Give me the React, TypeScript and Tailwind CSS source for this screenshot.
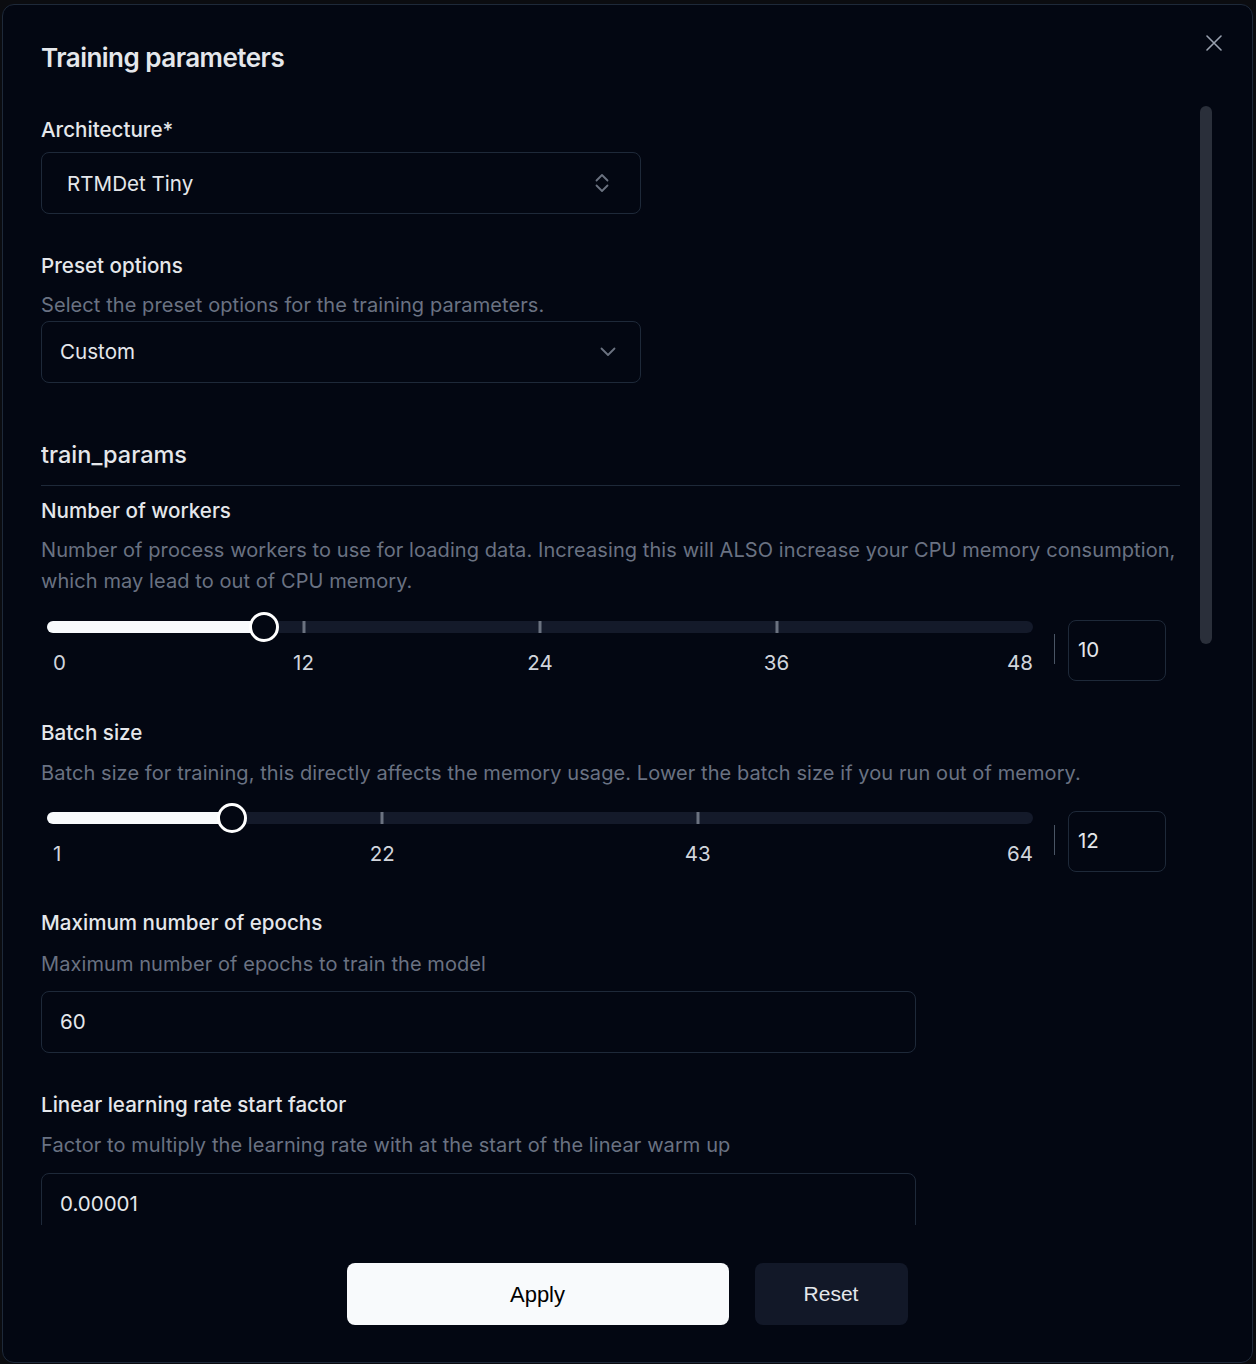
import React from "react";

const inter = "font-['Inter',sans-serif]";
const arial = "font-['Liberation_Sans',Arial,sans-serif]";

interface SliderProps {
  min: number;
  max: number;
  value: number;
  ticks: number[];
}

// Slider track is 986px wide; values sit 20px in from each end
const TRACK_W = 986;
const INSET = 20;

function pos(v: number, min: number, max: number): number {
  return INSET + ((v - min) / (max - min)) * (TRACK_W - INSET * 2);
}

function RangeRow({ min, max, value, ticks }: SliderProps): React.JSX.Element {
  const thumb = pos(value, min, max);
  return (
    <div className="mt-[15px] flex items-start">
      <div className="ml-[6px] w-[986px] flex-shrink-0">
        {/* track */}
        <div className="relative h-[30px]">
          <div className="absolute inset-x-0 top-[9px] h-3 rounded-full bg-[#141a2a]" />
          <div
            className="absolute left-0 top-[9px] h-3 rounded-full bg-[#f8fafc]"
            style={{ width: thumb }}
          />
          {ticks.map((t) => (
            <div
              key={t}
              className="absolute top-[9px] h-3 w-[3px] -translate-x-1/2 bg-[#6b7280]"
              style={{ left: pos(t, min, max) }}
            />
          ))}
          <div
            className="absolute top-0 h-[30px] w-[30px] -translate-x-1/2 rounded-full border-[3px] border-white bg-[#030712]"
            style={{ left: thumb }}
          />
        </div>
        {/* labels */}
        <div className="relative mt-[7px] h-[28px] text-[20.5px] leading-[28px] text-gray-300">
          <span className="absolute left-[6px] top-0">{min}</span>
          {ticks.map((t) => (
            <span
              key={t}
              className="absolute top-0 -translate-x-1/2"
              style={{ left: pos(t, min, max) }}
            >
              {t}
            </span>
          ))}
          <span className="absolute right-0 top-0">{max}</span>
        </div>
      </div>
      <div className="ml-[21px] mt-[22px] h-[30px] w-px bg-gray-600" />
      <div className="ml-[13px] mt-[8px] flex h-[61px] w-[98px] items-center rounded-lg border border-gray-800 pl-[9px] text-[20.5px] text-gray-200">
        {value}
      </div>
    </div>
  );
}

function Label({ children, className = "" }: { children: React.ReactNode; className?: string }): React.JSX.Element {
  return (
    <div className={`text-[20.6px] font-medium leading-[28px] text-gray-200 ${className}`}>
      {children}
    </div>
  );
}

function Desc({ children, className = "" }: { children: React.ReactNode; className?: string }): React.JSX.Element {
  return <p className={`text-[20px] leading-[31px] tracking-[0.08px] text-gray-500 ${className}`}>{children}</p>;
}

export default function App(): React.JSX.Element {
  return (
    <div className={`min-h-[1364px] bg-[#0b0c10] pl-[2px] pt-[4px] ${inter}`}>
      {/* ── Dialog ─────────────────────────────────────────────── */}
      <div className="relative flex h-[1359px] w-[1251px] flex-col rounded-xl border border-gray-800 bg-[#030712] pl-[38px] pr-[39px] pt-[35px]">
        <button className="absolute right-[30px] top-[30px] text-gray-400" aria-label="Close">
          <svg width="16" height="16" viewBox="0 0 16 16" fill="none" stroke="currentColor" strokeWidth="1.6" strokeLinecap="round">
            <path d="M1 1l14 14M15 1L1 15" />
          </svg>
        </button>

        <h1 className="text-[26px] font-semibold leading-[36px] tracking-[-0.02em] text-gray-200">
          Training parameters
        </h1>

        {/* ── Scroll area ─────────────────────────────────────── */}
        <div className="mt-[30px] flex h-[1119px] gap-[20px] overflow-hidden">
          <div className="w-[1139px] flex-shrink-0 pt-[10px]">
            <Label>Architecture*</Label>
            <div className="mt-[8px] flex h-[62px] w-[600px] items-center justify-between rounded-lg border border-gray-800 pl-[25px] pr-[31px] text-[20.6px] text-gray-200">
              <span className="pt-[2px]">RTMDet Tiny</span>
              <svg width="14" height="20" viewBox="0 0 14 20" fill="none" stroke="#6b7280" strokeWidth="1.8" strokeLinecap="round" strokeLinejoin="round">
                <path d="M1.5 7.5L7 2l5.5 5.5M1.5 12.5L7 18l5.5-5.5" />
              </svg>
            </div>

            <Label className="mt-[38px]">Preset options</Label>
            <p className="mt-[11px] text-[20px] leading-[28px] tracking-[0.08px] text-gray-500">
              Select the preset options for the training parameters.
            </p>
            <div className="mt-[2px] flex h-[62px] w-[600px] items-center justify-between rounded-lg border border-gray-800 pl-[18px] pr-[24px] text-[20.6px] text-gray-200">
              <span>Custom</span>
              <svg width="16" height="10" viewBox="0 0 16 10" fill="none" stroke="#6b7280" strokeWidth="1.8" strokeLinecap="round" strokeLinejoin="round">
                <path d="M1.5 1.5L8 8l6.5-6.5" />
              </svg>
            </div>

            <h2 className="mt-[57px] border-b border-gray-800 pb-[15px] text-[23.5px] font-medium leading-[30px] text-gray-200">
              train_params
            </h2>

            <Label className="mt-[11px]">Number of workers</Label>
            <Desc className="mt-[10px]">
              Number of process workers to use for loading data. Increasing this will ALSO increase your CPU memory consumption,
              which may lead to out of CPU memory.
            </Desc>
            <RangeRow min={0} max={48} value={10} ticks={[12, 24, 36]} />

            <Label className="mt-[38px]">Batch size</Label>
            <Desc className="mt-[11px]">
              Batch size for training, this directly affects the memory usage. Lower the batch size if you run out of memory.
            </Desc>
            <div className="-mt-px">
              <RangeRow min={1} max={64} value={12} ticks={[22, 43]} />
            </div>

            <Label className="mt-[37px]">Maximum number of epochs</Label>
            <Desc className="mt-[12px]">Maximum number of epochs to train the model</Desc>
            <div className="mt-[11px] flex h-[62px] w-[875px] items-center rounded-lg border border-gray-800 pl-[18px] text-[20.5px] text-gray-200">
              60
            </div>

            <Label className="mt-[38px]">Linear learning rate start factor</Label>
            <Desc className="mt-[11px]">Factor to multiply the learning rate with at the start of the linear warm up</Desc>
            <div className="mt-[12px] flex h-[62px] w-[875px] items-center rounded-lg border border-gray-800 pl-[18px] text-[20.5px] text-gray-200">
              0.00001
            </div>
          </div>

          {/* scrollbar */}
          <div className="w-[12px] flex-shrink-0">
            <div className="h-[538px] w-[12px] rounded-full bg-[#2a2f3a]" />
          </div>
        </div>

        {/* ── Footer ─────────────────────────────────────────── */}
        <div className={`mt-[38px] flex justify-center gap-[26px] ${arial}`}>
          <button className="h-[62px] w-[382px] rounded-lg bg-[#f8fafc] text-[22px] text-black">Apply</button>
          <button className="h-[62px] w-[153px] rounded-lg bg-[#121828] text-[21px] text-gray-200">Reset</button>
        </div>
      </div>
    </div>
  );
}
